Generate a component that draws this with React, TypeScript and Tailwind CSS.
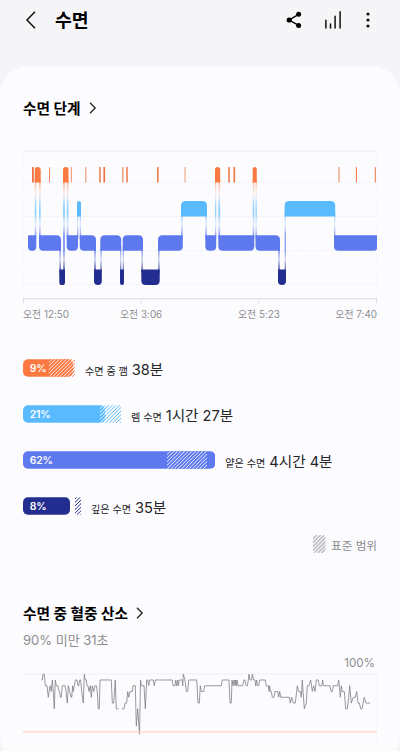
import { cva } from "class-variance-authority";

// ============================================
// DATA
// ============================================

type Level = "awake" | "rem" | "light" | "deep";

const LEVELS: Record<Level, { y: number; color: string }> = {
  awake: { y: 17, color: "#fb7840" },
  rem: { y: 51, color: "#5abaff" },
  light: { y: 85.2, color: "#5e79ee" },
  deep: { y: 119.4, color: "#222d8f" },
};

const ROW_HEIGHT = 15.6;

const STAGES: [number, number, Level][] = [
  [5, 13.3, "light"],
  [11.7, 17.7, "awake"],
  [16, 38, "light"],
  [36.3, 42, "deep"],
  [40, 45.5, "awake"],
  [43.7, 55, "light"],
  [54, 58, "rem"],
  [56.7, 73, "light"],
  [71, 78.8, "deep"],
  [77.3, 98.2, "light"],
  [97, 101, "deep"],
  [99.7, 120, "light"],
  [118.3, 136.7, "deep"],
  [135, 159.8, "light"],
  [158, 184, "rem"],
  [182.3, 193.2, "light"],
  [192, 197.2, "awake"],
  [195.3, 231.3, "light"],
  [229.7, 233.8, "awake"],
  [232.5, 257, "light"],
  [255, 263, "deep"],
  [261.6, 312.2, "rem"],
  [311, 354, "light"],
];

// short wake-ups: x, width, opacity
const WAKE_TICKS: [number, number, number][] = [
  [9, 1.8, 1],
  [26, 1, 0.85],
  [47.8, 1, 0.8],
  [62.2, 1.2, 0.7],
  [76.2, 1.6, 0.9],
  [80.4, 1.7, 1],
  [99.2, 1.2, 0.85],
  [103.2, 1.6, 0.9],
  [134, 1.7, 0.9],
  [161.4, 1.2, 0.6],
  [205.2, 1.7, 0.9],
  [210.4, 1.8, 0.9],
  [315.3, 1.5, 0.6],
  [332.9, 1, 1],
  [351.8, 1.1, 0.9],
];

const TIMES = ["오전 12:50", "오전 3:06", "오전 5:23", "오전 7:40"];

const SUMMARY = [
  { level: "awake", percent: "9%", bar: 50, range: [25.7, 52], label: "수면 중 깸", value: "38분" },
  { level: "rem", percent: "21%", bar: 82, range: [77, 98], label: "렘 수면", value: "1시간 27분" },
  { level: "light", percent: "62%", bar: 192.3, range: [144, 184], label: "얕은 수면", value: "4시간 4분" },
  { level: "deep", percent: "8%", bar: 47, range: [52, 58], label: "깊은 수면", value: "35분" },
] as const;

const OXYGEN: [number, number][][] = [
  [
    [18.3, 99], [19.3, 99], [20, 100], [21.3, 100], [22.3, 98], [24, 98], [25.3, 96], [27, 98], [28.3, 97],
    [29.3, 99], [30.3, 97], [31.3, 94], [32.3, 99], [33.3, 98], [35, 98], [36, 97], [36.7, 97], [37.3, 96],
    [38.3, 96], [39.3, 98], [42, 98], [43, 97], [44.3, 95], [45.3, 98], [46.7, 97], [48, 96], [48.7, 96],
    [49.7, 98], [50.3, 97], [51.3, 98], [52.3, 99], [54, 99], [55, 98], [55.7, 98], [56.7, 99], [57.7, 99],
    [58.7, 97], [60.3, 95], [61.3, 100], [62.3, 99], [63.3, 99], [64, 98], [65, 98], [66, 97], [67.3, 98],
    [68.3, 96], [69.3, 98], [70.7, 97], [72, 98], [73.3, 98], [74.3, 97], [75.3, 94], [76.3, 94], [77, 99],
    [88.3, 99], [89.3, 95], [90.7, 95], [92.3, 99], [93.3, 94], [95.7, 94],
  ],
  [
    [98.7, 94], [101, 94], [102, 95], [103.7, 95], [104.7, 97], [105.7, 96], [107, 97], [109.3, 97],
    [110, 98], [112.3, 98], [113.3, 91], [114.7, 94], [116.5, 89.6], [117.5, 99], [118.4, 98], [121, 98],
    [122.3, 94], [123.7, 99], [124.7, 99], [125.7, 98], [126.7, 99], [130.3, 99], [131.3, 98], [132.3, 99],
    [149.3, 99], [150, 98], [152, 98], [152.7, 99], [153.7, 98], [154.7, 99], [155.3, 98], [156.3, 99],
    [159.3, 99], [159.7, 98], [160.3, 100], [162, 99], [163.3, 97], [164.7, 97], [165.7, 99], [173.7, 99],
    [175, 95], [176.3, 95], [177.3, 98], [178.3, 97], [180.7, 97], [181.7, 98], [198.3, 98], [199.3, 99],
    [206, 99], [207, 95], [208.3, 95], [209, 99], [210, 98], [211, 99], [212, 98], [212.7, 99], [213.3, 98],
    [214, 99], [215, 98], [219.7, 98], [221, 99], [222, 99], [223, 98], [224.3, 98], [225.3, 99], [226, 100],
    [227, 99], [228.7, 99], [229.3, 100], [230.7, 99], [232, 99], [232.7, 98], [233.7, 99], [234.3, 98],
    [235.7, 98], [236.7, 99], [242.3, 99], [243.3, 98], [245.3, 98], [246, 97], [246.7, 98], [247.3, 97],
    [248.3, 97], [249.3, 96], [251, 96], [252, 97], [254.7, 97], [255.7, 96], [256.7, 97], [257.7, 96],
    [266.3, 96], [267.3, 95], [268.7, 96], [270.3, 95], [272.3, 95], [274.3, 98], [275.7, 97], [277.3, 97],
    [278.3, 96], [279.3, 99], [281.3, 94], [283.3, 95], [284.3, 98], [286, 98], [287.7, 99], [289.3, 97],
    [290.7, 98], [292, 97], [293.3, 99], [295.3, 99], [296.3, 98], [298.7, 98], [299.7, 99], [300.3, 98],
    [307, 98], [308, 97], [309.3, 97], [310.3, 98], [314.7, 98], [315.7, 99], [317.3, 96], [318.3, 98],
    [319.3, 97], [321.3, 97], [322.7, 94], [324.3, 94], [325.7, 96], [326.7, 98], [328.3, 95], [330.3, 96],
    [332.3, 96], [333.7, 97], [335, 95], [336.3, 95], [337.7, 94], [339, 94], [341.3, 96], [343, 95], [347, 95],
  ],
];

// ============================================
// ICONS
// ============================================

function BackIcon() {
  return (
    <svg width="12" height="20" viewBox="0 0 12 20" fill="none" stroke="#111" strokeWidth="1.5">
      <path d="M10 1.8 2 10l8 8.2" />
    </svg>
  );
}

function ShareIcon() {
  return (
    <svg width="16" height="18" viewBox="0 0 16 18" fill="#000">
      <path d="M12.6 3.4 3.2 9l9.4 5.4" fill="none" stroke="#000" strokeWidth="1.4" />
      <circle cx="12.6" cy="3.3" r="2.5" />
      <circle cx="3.2" cy="9" r="2.6" />
      <circle cx="12.6" cy="14.6" r="2.5" />
    </svg>
  );
}

function TrendIcon() {
  return (
    <svg width="18" height="20" viewBox="0 0 18 20" stroke="#111" strokeWidth="1.5" strokeLinecap="round">
      <path d="M1.9 10.2v7.9M6.5 14v4.1M11.1 6.2v11.9M16.1 1.8v16.3" />
    </svg>
  );
}

function MoreIcon() {
  return (
    <svg width="4" height="16" viewBox="0 0 4 16" fill="#111">
      <circle cx="2" cy="2" r="1.6" />
      <circle cx="2" cy="8" r="1.6" />
      <circle cx="2" cy="14" r="1.6" />
    </svg>
  );
}

function SectionTitle({ children }: { children: string }) {
  return (
    <h2 className="flex h-5 items-center gap-2 text-[14.7px] font-bold leading-5 text-black">
      <span className="pt-[2px]">{children}</span>
      <svg width="8" height="12" viewBox="0 0 8 12" fill="none" stroke="#222" strokeWidth="1.3">
        <path d="M1 .8 6.2 6 1 11.2" />
      </svg>
    </h2>
  );
}

// ============================================
// SLEEP STAGES
// ============================================

const ORDER: Level[] = ["awake", "rem", "light", "deep"];

// a corner is rounded only where the line turns up or down
function segmentPath(i: number) {
  const [x0, x1, level] = STAGES[i];
  const y0 = LEVELS[level].y;
  const y1 = y0 + ROW_HEIGHT;
  const rank = ORDER.indexOf(level);
  const prev = i > 0 ? ORDER.indexOf(STAGES[i - 1][2]) : rank;
  const next = i < STAGES.length - 1 ? ORDER.indexOf(STAGES[i + 1][2]) : rank;
  const r = Math.min(4.5, (x1 - x0) / 2);
  const tl = prev > rank ? r : i === 0 ? 1 : 0;
  const bl = prev < rank || i === 0 ? r : 0;
  const tr = next > rank ? r : 0;
  const br = next < rank ? r : next === rank ? 3 : 0;
  return `M${x0 + tl} ${y0}H${x1 - tr}q${tr} 0 ${tr} ${tr}V${y1 - br}q0 ${br} ${-br} ${br}H${x0 + bl}q${-bl} 0 ${-bl} ${-bl}V${y0 + tl}q0 ${-tl} ${tl} ${-tl}Z`;
}

function StageChart() {
  return (
    <svg className="block" width="354" height="156" viewBox="0 0 354 156">
      <defs>
        <linearGradient id="link" gradientUnits="userSpaceOnUse" x1="0" y1="32" x2="0" y2="120">
          <stop offset="0" stopColor="#fb7840" stopOpacity="0.7" />
          <stop offset="0.14" stopColor="#f5d3c8" stopOpacity="0.5" />
          <stop offset="0.24" stopColor="#5abaff" stopOpacity="0.7" />
          <stop offset="0.36" stopColor="#5abaff" />
          <stop offset="0.48" stopColor="#c3d4fa" stopOpacity="0.6" />
          <stop offset="0.6" stopColor="#5e79ee" />
          <stop offset="0.78" stopColor="#5e79ee" />
          <stop offset="0.88" stopColor="#a8b0e0" stopOpacity="0.7" />
          <stop offset="1" stopColor="#222d8f" />
        </linearGradient>
      </defs>
      <path d="M0 1H354" stroke="#f4f4f6" strokeWidth="2" />
      <path d="M0 32.5H354M0 66.5H354M0 100.5H354M0 134.5H354" stroke="#efeff3" strokeDasharray="1.5 1.5" />
      <path d="M.5 2V148M353.5 2V148" stroke="#f5f5f8" strokeDasharray="1.5 1.5" />
      {STAGES.slice(1).map(([x0, , level], i) => {
        const from = LEVELS[STAGES[i][2]].y;
        const to = LEVELS[level].y;
        const top = Math.min(from, to) + ROW_HEIGHT - 4;
        return (
          <rect
            key={i}
            x={x0}
            y={top}
            width={Math.max(1.3, STAGES[i][1] - x0)}
            height={Math.max(from, to) + 4 - top}
            fill="url(#link)"
            opacity="0.7"
          />
        );
      })}
      {STAGES.map(([, , level], i) => (
        <path key={i} d={segmentPath(i)} fill={LEVELS[level].color} />
      ))}
      {WAKE_TICKS.map(([x, w, opacity]) => (
        <rect key={x} x={x} y="17" width={w} height="15.6" rx="0.5" fill="#ec7340" opacity={opacity} />
      ))}
      <path d="M0 148.7H354" stroke="#e2e2e5" strokeWidth="1.2" />
      <path d="M.5 149v4.5M118 149v4.5M235.7 149v4.5M353.5 149v4.5" stroke="#e2e2e5" />
    </svg>
  );
}

// ============================================
// SUMMARY BARS
// ============================================

const percentLabel = cva("fill-white font-['Inter'] text-[10.4px] font-semibold", {
  variants: {
    size: { narrow: "tracking-[-0.2px]", wide: "tracking-[-0.1px]" },
  },
});

// diagonal strokes that cover x0..x1 over the full bar height
function hatch(x0: number, x1: number, step: number) {
  let d = "";
  for (let x = x0 - 18; x < x1; x += step) {
    d += `M${x.toFixed(2)} 18l18-18`;
  }
  return d;
}

function SummaryBar({ level, percent, bar, range, label, value }: (typeof SUMMARY)[number]) {
  const color = LEVELS[level].color;
  const [start, end] = range;
  const width = Math.max(bar, end);
  return (
    <li className="flex h-[18px] items-center gap-[10px]">
      <svg className="shrink-0" width={width} height="18" viewBox={`0 0 ${width} 18`}>
        <defs>
          <clipPath id={`bar-${level}`}>
            <rect y="0.3" width={bar} height="17.5" rx="5" />
          </clipPath>
          <clipPath id={`range-${level}`}>
            <rect x={start} y="0.3" width={end - start} height="17.5" />
          </clipPath>
        </defs>
        <g clipPath={`url(#range-${level})`}>
          <path d={hatch(start + 1.8, end, 3.6)} stroke={color} strokeWidth="1" />
        </g>
        <g clipPath={`url(#bar-${level})`}>
          <rect width={bar} height="18" fill={color} />
          <g clipPath={`url(#range-${level})`}>
            <path d={hatch(start, end, 3.6)} stroke="#fcfcff" strokeWidth="0.9" />
          </g>
        </g>
        <text x="6.7" y="13" className={percentLabel({ size: percent.length > 2 ? "wide" : "narrow" })}>
          {percent}
        </text>
      </svg>
      <p className="flex items-baseline gap-1 whitespace-nowrap pt-[5px] leading-[18px] text-[#252528]">
        <span className="text-[10.1px]">{label}</span>
        <span className="text-[14.6px]">{value}</span>
      </p>
    </li>
  );
}

function RangeLegend() {
  return (
    <div className="flex h-[18px] items-center justify-end gap-[5px]">
      <svg width="13" height="18" viewBox="0 0 13 18">
        <defs>
          <clipPath id="legend">
            <rect width="12.5" height="18" rx="2.5" />
          </clipPath>
        </defs>
        <g clipPath="url(#legend)">
          <path d={hatch(0, 13, 3.8)} stroke="#bdbdc0" strokeWidth="1.6" />
        </g>
      </svg>
      <span className="pt-[3px] text-[11.6px] leading-[18px] text-[#8a8a8e]">표준 범위</span>
    </div>
  );
}

// ============================================
// BLOOD OXYGEN
// ============================================

function OxygenChart() {
  const toY = (percent: number) => 1.2 + (100 - percent) * 5.77;
  return (
    <svg className="block" width="354" height="72" viewBox="0 0 354 72">
      <path d="M0 1H354" stroke="#efeff2" />
      <path d="M353.5 1V72" stroke="#f7f7fa" />
      {OXYGEN.map((run, i) => (
        <polyline
          key={i}
          points={run.map(([x, percent]) => `${x},${toY(percent)}`).join(" ")}
          fill="none"
          stroke="#808083"
          strokeWidth="0.8"
          strokeLinejoin="round"
        />
      ))}
      <path d="M0 58.9H354" stroke="#fdd3c7" strokeWidth="1.2" />
    </svg>
  );
}

export default function App() {
  return (
    <div className="flex h-[751px] w-[400px] flex-col overflow-hidden bg-[#f5f5f7] font-['Inter','Noto_Sans_CJK_KR',sans-serif]">
      <header className="flex h-[66px] shrink-0 items-start pl-[25px] pr-[30px] pt-[5px]">
        <div className="flex h-[30px] w-full items-center">
          <BackIcon />
          <h1 className="ml-[18px] pt-px text-[18.3px] font-bold text-black">수면</h1>
          <div className="ml-auto flex items-center">
            <ShareIcon />
            <div className="ml-[22px]">
              <TrendIcon />
            </div>
            <div className="ml-[24px]">
              <MoreIcon />
            </div>
          </div>
        </div>
      </header>

      <main className="h-[697px] shrink-0 rounded-[28px] bg-[#fcfcff] px-[23px] pt-[32px]">
        <SectionTitle>수면 단계</SectionTitle>
        <div className="mt-[32px]">
          <StageChart />
        </div>
        <div className="flex h-4 text-[9.9px] leading-4 text-[#8d8d90]">
          <span className="w-[97px]">{TIMES[0]}</span>
          <span className="w-[118px]">{TIMES[1]}</span>
          <span>{TIMES[2]}</span>
          <span className="ml-auto">{TIMES[3]}</span>
        </div>

        <ul className="mt-[37px] flex flex-col gap-7">
          {SUMMARY.map((row) => (
            <SummaryBar key={row.level} {...row} />
          ))}
        </ul>
        <div className="mt-[20px]">
          <RangeLegend />
        </div>

        <div className="mt-[50px]">
          <SectionTitle>수면 중 혈중 산소</SectionTitle>
        </div>
        <p className="mt-[6.5px] h-5 text-[13px] leading-5 text-[#8d8d90]">90% 미만 31초</p>
        <p className="mt-[5px] h-4 pr-[2px] text-right text-[11.6px] leading-4 text-[#8d8d90]">100%</p>
        <div className="mt-[2px]">
          <OxygenChart />
        </div>
      </main>
    </div>
  );
}
